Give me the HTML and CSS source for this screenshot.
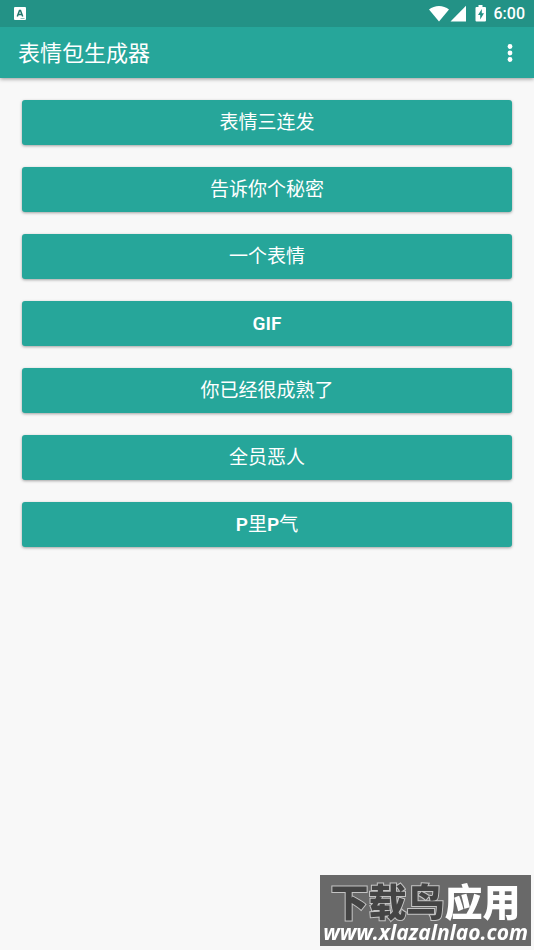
FILE: index.html
```
<!DOCTYPE html>
<html lang="zh-CN">
<head>
<meta charset="utf-8">
<meta name="viewport" content="width=device-width, initial-scale=1">
<title>表情包生成器</title>
<link rel="stylesheet" href="styles.css">
</head>
<body>
<header class="header">
  <div class="status">
    <svg class="notice" width="12" height="13" viewBox="0 0 12 13" aria-hidden="true">
      <rect width="12" height="13" rx="1" fill="#fff"/>
      <path d="M3.300 9.500 5.500 3.500h1L8.700 9.500M4 7.500h4" fill="none" stroke="#24786e" stroke-width="1.500"/>
      <path d="M6.500 11.500h4" stroke="#8fc5be" stroke-width="1"/>
    </svg>
    <div class="indicators">
      <svg width="57" height="18" viewBox="0 0 57 18" aria-hidden="true">
        <path d="M0 4.500C5.500-.3 14.500-.3 20 4.500L10 16.500Z" fill="#fff"/>
        <path d="M37 .8V16.500H21.500Z" fill="#fff"/>
        <path d="M49.500 0h4v2H56q1 0 1 1v12.500q0 1-1 1h-8.500q-1 0-1-1V3q0-1 1-1h2Z" fill="#fff"/>
        <path d="M52.800 4 49 10h2.200v4.500L55 8.300h-2.200Z" fill="#239286"/>
      </svg>
      <span class="clock">6:00</span>
    </div>
  </div>
  <div class="toolbar">
    <h1 class="title">表情包生成器</h1>
    <button class="more" type="button" aria-label="更多选项">
      <svg width="6" height="20" viewBox="0 0 6 20" aria-hidden="true" fill="#fff">
        <circle cx="3" cy="2.500" r="2.400"/><circle cx="3" cy="9" r="2.400"/><circle cx="3" cy="15.500" r="2.400"/>
      </svg>
    </button>
  </div>
</header>
<main class="list">
  <button class="item" type="button">表情三连发</button>
  <button class="item" type="button">告诉你个秘密</button>
  <button class="item" type="button">一个表情</button>
  <button class="item" type="button"><b>GIF</b></button>
  <button class="item" type="button">你已经很成熟了</button>
  <button class="item" type="button">全员恶人</button>
  <button class="item" type="button"><b>P</b>里<b>P</b>气</button>
</main>
<aside class="mark">
  <div class="mark-name"><span class="mark-dark">下载鸟</span>应用</div>
  <div class="mark-site">www.xlazalnlao.com</div>
</aside>
</body>
</html>
```
FILE: styles.css
```
* { box-sizing: border-box; }
body {
  margin: 0;
  min-height: 100vh;
  background: #f8f8f8;
  color: #fff;
  font-family: Roboto, "Noto Sans CJK SC", sans-serif;
}
button {
  border: 0;
  color: inherit;
  font-family: inherit;
}
svg { display: block; }
.header {
  background: #26a69a;
  box-shadow: 0 1px 4px rgba(0, 0, 0, .4);
}
.status {
  display: flex;
  align-items: center;
  justify-content: space-between;
  height: 27px;
  padding: 0 9px 0 14px;
  background: #239286;
}
.indicators {
  display: flex;
  align-items: center;
  gap: 8px;
}
.clock {
  font-size: 16px;
  font-weight: 500;
  line-height: 27px;
}
.toolbar {
  display: flex;
  align-items: center;
  justify-content: space-between;
  height: 51px;
  padding: 2px 11px 0 18px;
}
.title {
  margin: 0;
  font-size: 22px;
  font-weight: 400;
  line-height: 32px;
}
.more {
  display: flex;
  align-items: center;
  justify-content: center;
  width: 26px;
  height: 40px;
  padding: 0;
  background: none;
}
.list {
  display: flex;
  flex-direction: column;
  gap: 22px;
  padding: 22px;
}
.item {
  height: 45px;
  padding: 0 16px;
  border-radius: 3px;
  background: #26a69a;
  box-shadow: 0 1px 3px rgba(0, 0, 0, .35);
  font-size: 19px;
  line-height: 28px;
}
.item b { font-weight: 600; }
.mark {
  position: fixed;
  right: 3px;
  bottom: 4px;
  padding: 4px 3px 1px;
  background: #696969;
  text-align: center;
  white-space: nowrap;
}
.mark-name {
  font-family: "Noto Sans CJK SC", sans-serif;
  font-size: 38px;
  font-weight: 900;
  line-height: 41px;
}
.mark-dark {
  color: #444;
  paint-order: stroke fill;
  -webkit-text-stroke: 2px #c4c4c4;
}
.mark-site {
  font-family: "Open Sans", sans-serif;
  font-size: 21px;
  font-style: italic;
  font-weight: 700;
  line-height: 25px;
}
```
